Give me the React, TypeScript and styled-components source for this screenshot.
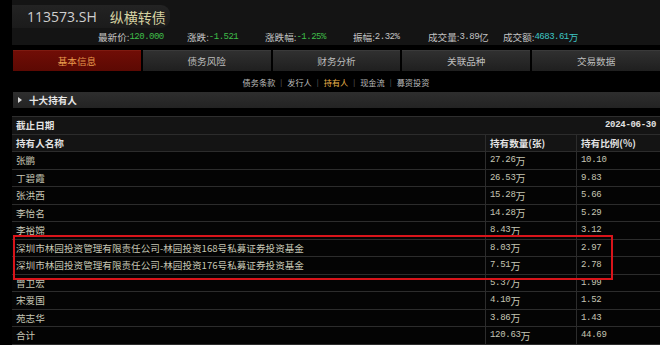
import styled, { createGlobalStyle } from "styled-components";

const GlobalStyle = createGlobalStyle`
  body {
    margin: 0;
    background: #000;
    font-family: "Noto Sans CJK SC", "Noto Sans", sans-serif;
  }
`;

const Page = styled.div`
  width: 660px;
  height: 345px;
  overflow: hidden;
  background: #000;
`;

const TopBar = styled.div`
  margin-left: 12px;
  height: 45px;
  padding-top: 5px;
  box-sizing: border-box;
  background: #141414;
`;

const TitleTab = styled.div`
  width: 158px;
  height: 23px;
  display: flex;
  align-items: center;
  gap: 13px;
  padding-left: 15px;
  box-sizing: border-box;
  border-radius: 0 9px 9px 0;
  background: linear-gradient(#232323, #1b1b1b);
`;

const Code = styled.span`
  font-family: "Open Sans", "Liberation Sans", sans-serif;
  font-size: 14px;
  color: #cfcfcf;
`;

const BondName = styled.span`
  font-size: 14px;
  color: #d6d2a2;
`;

const PriceRow = styled.div`
  display: flex;
  align-items: center;
  height: 14px;
  margin-top: 2px;
  padding-left: 86px;
`;

const Stat = styled.div<{ $w?: number }>`
  width: ${(p) => (p.$w ? `${p.$w}px` : "auto")};
  display: flex;
  align-items: center;
  font-size: 9.6px;
  color: #c4c4c4;
  white-space: nowrap;
`;

const StatValue = styled.span<{ $tone: "green" | "gray" | "cyan" }>`
  font-family: "Liberation Mono", monospace;
  font-size: 9px;
  letter-spacing: -0.5px;
  color: ${(p) =>
    p.$tone === "green" ? "#3fbf4a" : p.$tone === "cyan" ? "#3ec6c4" : "#c4c4c4"};
`;

const Tabs = styled.div`
  display: flex;
  gap: 2px;
  margin-top: 5px;
  padding-left: 13px;
  height: 21px;
`;

const Tab = styled.div<{ $active?: boolean }>`
  flex: 1;
  display: flex;
  align-items: center;
  justify-content: center;
  font-size: 9.6px;
  color: ${(p) => (p.$active ? "#e89a4c" : "#bdbdbd")};
  background: ${(p) =>
    p.$active
      ? "linear-gradient(#700d06, #5c0903)"
      : "linear-gradient(#303030, #1f1f1f)"};
  border-top: 1px solid ${(p) => (p.$active ? "#7e1a10" : "#3a3a3a")};
  box-sizing: border-box;
`;

const SubNav = styled.div`
  height: 21px;
  margin-left: 12px;
  display: flex;
  align-items: center;
  justify-content: center;
  gap: 5px;
  font-size: 8.2px;
  color: #bcbcbc;
`;

const SubLink = styled.span<{ $active?: boolean }>`
  color: ${(p) => (p.$active ? "#e8b24a" : "#bcbcbc")};
`;

const Divider = styled.span`
  color: #777;
  font-size: 7px;
`;

const SectionHeader = styled.div`
  margin-left: 13px;
  height: 16px;
  display: flex;
  align-items: center;
  gap: 7px;
  padding-left: 5px;
  background: linear-gradient(#2e2e2e, #232323);
  font-size: 9.6px;
  font-weight: 700;
  color: #e6e6e6;
`;

const Arrow = styled.span`
  width: 0;
  height: 0;
  border-top: 3px solid transparent;
  border-bottom: 3px solid transparent;
  border-left: 4px solid #d8d8d8;
`;

const TableWrap = styled.div`
  position: relative;
  margin: 8px 0 0 12px;
  border-top: 1px solid #2e2e2e;
`;

const Row = styled.div<{ $head?: boolean }>`
  display: grid;
  grid-template-columns: 473px 91px 1fr;
  height: 17.5px;
  box-sizing: border-box;
  border-bottom: 1px solid #2c2c2c;
  background: ${(p) => (p.$head ? "#141414" : "#040404")};
  font-weight: ${(p) => (p.$head ? 700 : 400)};
  color: ${(p) => (p.$head ? "#e2e2e2" : "#c6c6b4")};
`;

const DateRow = styled(Row)`
  display: flex;
  justify-content: space-between;
  align-items: center;
  padding: 0 4px;
`;

const Cell = styled.div<{ $num?: boolean }>`
  display: flex;
  align-items: center;
  padding-left: 4px;
  border-left: 1px solid #2c2c2c;
  font-size: ${(p) => (p.$num ? "9px" : "9.6px")};
  font-family: ${(p) =>
    p.$num ? `"Liberation Mono", "Noto Sans CJK SC", monospace` : "inherit"};
  letter-spacing: ${(p) => (p.$num ? "-0.3px" : "0")};
  white-space: nowrap;
  &:first-child {
    border-left: none;
  }
`;

const Wan = styled.span`
  font-family: "Noto Sans CJK SC", sans-serif;
  font-size: 10px;
  letter-spacing: 0;
`;

const DateText = styled.span`
  font-family: "Liberation Mono", monospace;
  font-size: 9px;
  letter-spacing: -0.3px;
`;

const Label = styled.span`
  font-size: 9.6px;
`;

const Highlight = styled.div`
  position: absolute;
  left: 1px;
  top: 118px;
  width: 600px;
  height: 45px;
  border: 2px solid #d8141a;
  box-sizing: border-box;
  pointer-events: none;
`;

const holders: [string, string, string][] = [
  ["张鹏", "27.26", "10.10"],
  ["丁碧霞", "26.53", "9.83"],
  ["张洪西", "15.28", "5.66"],
  ["李怡名", "14.28", "5.29"],
  ["李裕嫦", "8.43", "3.12"],
  ["深圳市林园投资管理有限责任公司-林园投资168号私募证券投资基金", "8.03", "2.97"],
  ["深圳市林园投资管理有限责任公司-林园投资176号私募证券投资基金", "7.51", "2.78"],
  ["曾卫宏", "5.37", "1.99"],
  ["宋爱国", "4.10", "1.52"],
  ["苑志华", "3.86", "1.43"],
  ["合计", "120.63", "44.69"],
];

const tabs = ["基本信息", "债务风险", "财务分析", "关联品种", "交易数据"];
const subLinks = ["债务条款", "发行人", "持有人", "现金流", "募资投资"];

export default function App() {
  return (
    <Page>
      <GlobalStyle />
      <TopBar>
        <TitleTab>
          <Code>113573.SH</Code>
          <BondName>纵横转债</BondName>
        </TitleTab>
        <PriceRow>
          <Stat $w={89}>
            最新价:<StatValue $tone="green">120.000</StatValue>
          </Stat>
          <Stat $w={78}>
            涨跌:<StatValue $tone="green">-1.521</StatValue>
          </Stat>
          <Stat $w={88}>
            涨跌幅:<StatValue $tone="green">-1.25%</StatValue>
          </Stat>
          <Stat $w={75}>
            振幅:<StatValue $tone="gray">2.32%</StatValue>
          </Stat>
          <Stat $w={75}>
            成交量:<StatValue $tone="gray">3.89</StatValue>亿
          </Stat>
          <Stat>
            成交额:<StatValue $tone="cyan">4683.61</StatValue>
            <span style={{ color: "#3ec6c4" }}>万</span>
          </Stat>
        </PriceRow>
      </TopBar>

      <Tabs>
        {tabs.map((t, i) => (
          <Tab key={t} $active={i === 0}>
            {t}
          </Tab>
        ))}
      </Tabs>

      <SubNav>
        {subLinks.map((s, i) => (
          <span key={s} style={{ display: "contents" }}>
            {i > 0 && <Divider>|</Divider>}
            <SubLink $active={s === "持有人"}>{s}</SubLink>
          </span>
        ))}
      </SubNav>

      <SectionHeader>
        <Arrow />
        十大持有人
      </SectionHeader>

      <TableWrap>
        <DateRow $head>
          <Label>截止日期</Label>
          <DateText>2024-06-30</DateText>
        </DateRow>
        <Row $head>
          <Cell>持有人名称</Cell>
          <Cell>持有数量(张)</Cell>
          <Cell>持有比例(%)</Cell>
        </Row>
        {holders.map(([name, qty, ratio]) => (
          <Row key={name}>
            <Cell>{name}</Cell>
            <Cell $num>
              {qty}
              <Wan>万</Wan>
            </Cell>
            <Cell $num>{ratio}</Cell>
          </Row>
        ))}
        <Highlight />
      </TableWrap>
    </Page>
  );
}
